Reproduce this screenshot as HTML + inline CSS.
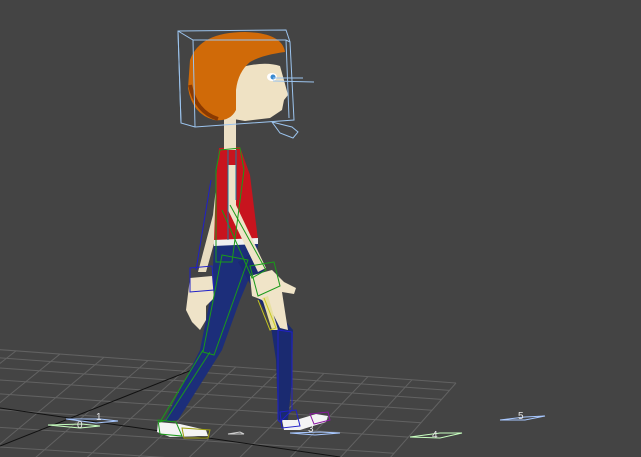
<!DOCTYPE html>
<html><head><meta charset="utf-8"><style>
html,body{margin:0;padding:0;background:#444444;width:641px;height:457px;overflow:hidden}
svg{display:block}
text{font-family:"Liberation Sans",sans-serif;font-size:10px;fill:#e8e8e8}
</style></head><body>
<svg id="s" width="641" height="457" viewBox="0 0 641 457">
<rect width="641" height="457" fill="#444444"/>
<g id="grid" stroke="#626262" stroke-width="1" fill="none"></g>
<line x1="0" y1="408" x2="340" y2="457" stroke="#111" stroke-width="1"/>
<line x1="0" y1="446" x2="212" y2="362" stroke="#111" stroke-width="1"/>

<g stroke-width="1" fill="none">
<path d="M48,425 L82,424 L100,426 L80,428 Z" stroke="#c8ffc0"/>
<path d="M66,419 L100,419 L118,421 L96,423 Z" stroke="#a8c8ff"/>
<path d="M410,437 L440,433 L462,433 L440,438 Z" stroke="#c8ffc0"/>
<path d="M500,420 L525,417 L545,416 L525,420 Z" stroke="#a8c8ff"/>
<path d="M290,433 L320,432 L340,433 L315,435 Z" stroke="#a8c8ff"/>
<path d="M228,434 L240,432 L244,434 Z" stroke="#d0d0d0"/>
</g>
<text x="77" y="428">0</text>
<text x="96" y="420">1</text>
<text x="432" y="438">4</text>
<text x="518" y="419">5</text>
<text x="308" y="432">3</text>

<path d="M228,160 L222,215 L206,272 L198,272 L213,215 L219,160 Z" fill="#e8dcc0"/>
<path d="M214,244 L258,244 L256,262 L240,300 L222,350 L178,420 L164,422 L200,350 L212,290 Z" fill="#1c2e7a"/>
<path d="M238,262 L258,250 L276,310 L293,330 L292,380 L288,420 L278,420 L276,360 L270,320 Z" fill="#1a2a70"/>
<path d="M219,148 L240,147 L250,175 L258,240 L214,242 L216,180 Z" fill="#c8141e"/>
<path d="M214,240 L258,238 L258,244 L214,246 Z" fill="#f0f0f0"/>
<rect x="224" y="118" width="12" height="32" fill="#ece0c6"/>
<path d="M228,165 L236,165 L236,205 L266,268 L258,272 L228,210 Z" fill="#efe3c8"/>
<path d="M190,278 L212,276 L214,298 L206,306 L206,320 L200,330 L192,322 L186,310 Z" fill="#efe3c8"/>
<path d="M250,276 L272,270 L284,282 L296,288 L294,294 L282,292 L286,318 L288,330 L280,328 L274,316 L262,300 L252,296 Z" fill="#f0e4c8"/>
<path d="M262,298 L272,330 L278,330 L268,296 Z" fill="#e8e0a0"/>
<path d="M158,422 L180,424 L206,430 L208,436 L170,437 L157,432 Z" fill="#f4f4f4"/>
<path d="M282,420 L296,420 L316,414 L328,416 L326,422 L300,430 L284,430 Z" fill="#f4f4f4"/>
<path d="M310,414 L328,412 L330,420 L314,424 Z" fill="none" stroke="#8a18a0"/>
<g fill="none" stroke-width="1">
<path d="M220,150 L240,148 L244,170 L232,262 L216,262 L216,170 Z" stroke="#1a9a1a"/>
<path d="M230,205 L266,270 L252,278 L222,210" stroke="#1a9a1a"/>
<path d="M250,266 L274,262 L280,286 L258,296 Z" stroke="#1a9a1a"/>
<path d="M222,255 L248,260 L214,355 L203,352 Z" stroke="#1a9a1a"/>
<path d="M210,352 L166,420 L160,422 L203,350" stroke="#1a9a1a"/>
<path d="M158,420 L176,422 L182,436 L160,434 Z" stroke="#1a9a1a"/>
<path d="M182,428 L210,430 L208,438 L184,438 Z" stroke="#a0a010"/>
<path d="M211,180 L196,270 M190,268 L212,266 L214,290 L190,292 Z" stroke="#2020c8"/>
<path d="M278,330 L292,332 L292,410 L280,422 L278,420 Z" stroke="#2020c8"/>
<path d="M280,412 L296,410 L300,426 L282,428 Z" stroke="#2020c8"/>
<path d="M258,300 L270,330 L276,328 L264,298" stroke="#c8c820"/>
<path d="M228,150 L228,240 M236,150 L236,200" stroke="#1a7aa0"/>
</g>
<path d="M232,70 Q262,60 280,66 Q284,80 288,95 L284,100 L282,110 L270,118 L245,121 L228,118 L224,90 Z" fill="#efe2c4"/>
<path d="M190,60 Q200,32 245,32 Q282,33 285,52 Q262,55 250,62 Q238,72 236,90 L236,110 Q230,122 214,120 Q192,114 188,88 Z" fill="#d06a08"/>
<path d="M190,85 Q196,112 218,119" fill="none" stroke="#8a3a02" stroke-width="4"/>
<ellipse cx="272" cy="77" rx="5" ry="4" fill="#fff"/>
<circle cx="273" cy="77" r="2.5" fill="#3a8ad0"/>
<g fill="none" stroke="#9cc4ee" stroke-width="1">
<path d="M178,31 L286,30 L290,42 L294,120 L195,127 L181,123 Z"/>
<path d="M178,31 L193,40 L286,40 L290,42 M193,40 L195,127 M181,123 L178,31 M286,40 L289,118"/>
<path d="M272,122 L292,127 L298,132 L293,138 L280,133 Z"/>
<line x1="273" y1="78" x2="303" y2="78"/>
<line x1="273" y1="81" x2="314" y2="82"/>
</g>
</svg>
<script>
(function(){
var g=document.getElementById('grid');
function L(a,b,t){return [a[0]+(b[0]-a[0])*t,a[1]+(b[1]-a[1])*t];}
var FL=[-160,338],FR=[456,383],NL=[-420,520],NR=[300,560];
var n=11,m=14,s='';
for(var i=0;i<=n;i++){var t=i/n;t=t*t*0.6+t*0.4;var a=L(FL,NL,t),b=L(FR,NR,t);
s+='<line x1="'+a[0]+'" y1="'+a[1]+'" x2="'+b[0]+'" y2="'+b[1]+'"/>';}
for(var j=0;j<=m;j++){var u=j/m;var a=L(FL,FR,u),b=L(NL,NR,u);
s+='<line x1="'+a[0]+'" y1="'+a[1]+'" x2="'+b[0]+'" y2="'+b[1]+'"/>';}
g.innerHTML=s;
})();
</script>
</body></html>
